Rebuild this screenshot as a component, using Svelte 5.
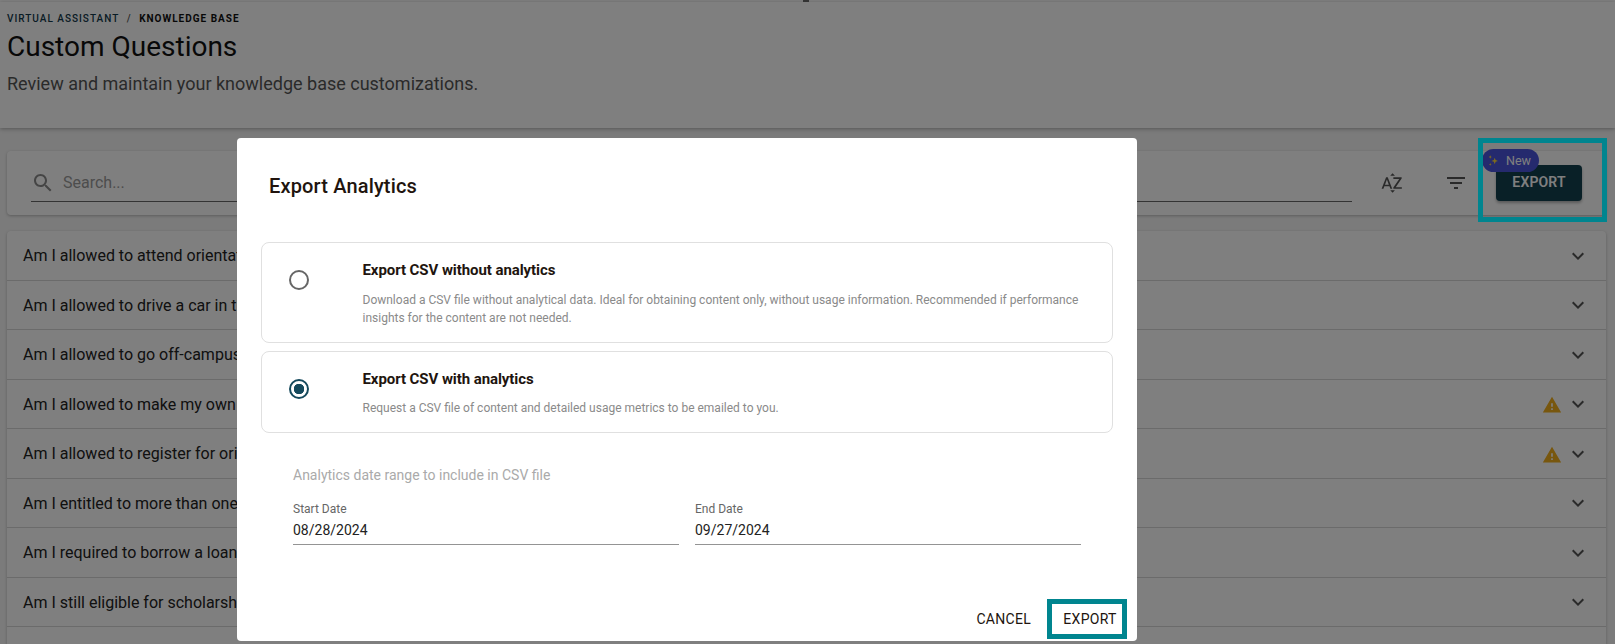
<script lang="ts">
	const questions = [
		{ text: 'Am I allowed to attend orientation virtually instead of in person?' },
		{ text: 'Am I allowed to drive a car in the first year on campus?' },
		{ text: 'Am I allowed to go off-campus during the school day?' },
		{ text: 'Am I allowed to make my own schedule for next term?', warn: true },
		{ text: 'Am I allowed to register for orientation after the deadline?', warn: true },
		{ text: 'Am I entitled to more than one transcript for free?' },
		{ text: 'Am I required to borrow a loan to pay my tuition?' },
		{ text: 'Am I still eligible for scholarships as a part-time student?' }
	];
</script>

<div class="page">
	<div class="topline"></div>
	<header class="head">
		<div class="crumbs"><span>VIRTUAL ASSISTANT</span><i>/</i><b>KNOWLEDGE BASE</b></div>
		<h1>Custom Questions</h1>
		<p>Review and maintain your knowledge base customizations.</p>
	</header>

	<main class="content">
		<section class="toolbar">
			<div class="search">
				<svg viewBox="0 0 24 24" width="24" height="24"><path d="M15.5 14h-.79l-.28-.27C15.41 12.59 16 11.11 16 9.5 16 5.91 13.09 3 9.5 3S3 5.91 3 9.5 5.91 16 9.5 16c1.61 0 3.09-.59 4.23-1.57l.27.28v.79l5 4.99L20.49 19l-4.99-5zm-6 0C7.01 14 5 11.99 5 9.5S7.01 5 9.5 5 14 7.01 14 9.5 11.99 14 9.5 14z" /></svg>
				<span>Search...</span>
			</div>
			<svg class="tool" viewBox="0 0 24 24" width="24" height="24"><path d="M14.94 4.66h-4.72l2.36-2.36 2.36 2.36zm-4.69 14.71h4.66l-2.33 2.33-2.33-2.33zM6.1 6.27 1.6 17.73h1.84l.92-2.45h5.11l.92 2.45h1.84L7.74 6.27H6.1zm-1.13 7.37 1.94-5.18 1.94 5.18H4.97zm10.76 2.5h6.12v1.59h-8.53v-1.29l5.92-8.56h-5.88v-1.6h8.3v1.26l-5.93 8.6z" /></svg>
			<svg class="tool filter" viewBox="0 0 24 24" width="24" height="24"><path d="M10 18h4v-2h-4v2zM3 6v2h18V6H3zm3 7h12v-2H6v2z" /></svg>
			<div class="export-wrap">
				<button class="export">EXPORT</button>
				<span class="badge">
					<svg viewBox="0 0 16 16" width="13" height="13"><path d="M9.5 4.5 10.6 7.4 13.5 8.5 10.6 9.6 9.5 12.5 8.4 9.6 5.5 8.5 8.4 7.4Z" /><path d="M4 1.5 4.6 3 6 3.6 4.6 4.2 4 5.7 3.4 4.2 2 3.6 3.4 3ZM4 11 4.5 12.2 5.7 12.7 4.5 13.2 4 14.4 3.5 13.2 2.3 12.7 3.5 12.2Z" /></svg>
					<span>New</span>
				</span>
			</div>
		</section>

		<ul class="list">
			{#each questions as q}
				<li>
					<span class="q">{q.text}</span>
					{#if q.warn}
						<svg class="warn" viewBox="0 0 24 24" width="20" height="20"><path d="M1 21h22L12 2 1 21zm12-3h-2v-2h2v2zm0-4h-2v-4h2v4z" /></svg>
					{/if}
					<svg class="chev" viewBox="0 0 24 24" width="24" height="24"><path d="M16.59 8.59 12 13.17 7.41 8.59 6 10l6 6 6-6z" /></svg>
				</li>
			{/each}
			<li class="blank"></li>
		</ul>
	</main>

	<div class="backdrop"></div>
	<div class="cursor"></div>

	<div class="highlight top"></div>

	<div class="dialog">
		<h2>Export Analytics</h2>

		<div class="options">
			<div class="option first">
				<span class="radio"></span>
				<div>
					<h3>Export CSV without analytics</h3>
					<p>Download a CSV file without analytical data. Ideal for obtaining content only, without usage information. Recommended if performance insights for the content are not needed.</p>
				</div>
			</div>
			<div class="option second">
				<span class="radio on"></span>
				<div>
					<h3>Export CSV with analytics</h3>
					<p>Request a CSV file of content and detailed usage metrics to be emailed to you.</p>
				</div>
			</div>
		</div>

		<div class="range">
			<div class="range-title">Analytics date range to include in CSV file</div>
			<div class="dates">
				<div class="field">
					<span class="lbl">Start Date</span>
					<div class="val">08/28/2024</div>
				</div>
				<div class="field">
					<span class="lbl">End Date</span>
					<div class="val">09/27/2024</div>
				</div>
			</div>
		</div>

		<div class="actions">
			<button class="txt">CANCEL</button>
			<button class="txt hl">EXPORT</button>
		</div>
	</div>
</div>

<style>
	:global(body) {
		margin: 0;
		font-family: Roboto, 'Liberation Sans', sans-serif;
	}

	.page {
		position: relative;
		width: 1615px;
		height: 644px;
		overflow: hidden;
		background: #f6f6f6;
		color: #1a1a1a;
	}

	.topline {
		height: 2px;
		background: #fff;
	}

	.head {
		height: 126px;
		box-sizing: border-box;
		padding: 11px 7px 0;
		background: #fff;
		box-shadow: 0 1px 4px rgba(0, 0, 0, 0.3);
		position: relative;
	}

	.crumbs {
		display: flex;
		align-items: center;
		gap: 7.5px;
		font-size: 10px;
		line-height: 12px;
		font-weight: 500;
		letter-spacing: 0.1em;
		color: #12384a;
	}

	.crumbs i {
		font-style: normal;
		color: #555;
	}

	.crumbs b {
		font-weight: 700;
		color: #111;
	}

	h1 {
		margin: 5px 0 0;
		font-size: 28px;
		line-height: 34px;
		font-weight: 400;
		color: #111;
	}

	.head p {
		margin: 8px 0 0;
		font-size: 18px;
		line-height: 24px;
		color: #555;
	}

	.content {
		padding: 23px 9px 0 7px;
	}

	.toolbar {
		display: flex;
		align-items: center;
		height: 64px;
		padding-left: 24px;
		background: #fff;
		border-radius: 4px;
		box-shadow: 0 1px 3px rgba(0, 0, 0, 0.25);
	}

	.search {
		flex: 1;
		display: flex;
		align-items: center;
		gap: 8px;
		height: 37px;
		box-sizing: border-box;
		border-bottom: 1px solid #666;
		font-size: 16px;
		color: #9a9a9a;
	}

	.search svg {
		fill: #8a8a8a;
	}

	.tool {
		fill: #555;
		margin-left: 28px;
		flex: none;
	}

	.tool.filter {
		margin-left: 40px;
	}

	.export-wrap {
		position: relative;
		margin: 0 24px 0 28px;
	}

	.export {
		display: block;
		width: 86px;
		height: 36px;
		padding: 0 0 2px;
		border: 0;
		border-radius: 4px;
		background: #12404f;
		color: #fff;
		font: 600 14px/34px Roboto, sans-serif;
		letter-spacing: 0.01em;
		box-shadow: 0 2px 3px rgba(0, 0, 0, 0.3);
	}

	.badge {
		position: absolute;
		left: -14px;
		top: -16px;
		display: flex;
		align-items: center;
		gap: 6px;
		height: 23px;
		width: 57px;
		box-sizing: border-box;
		padding: 0 0 1px 5px;
		border-radius: 12px;
		background: #4a54dc;
		color: #fff;
		font-size: 12.5px;
	}

	.badge svg {
		fill: #ffd83a;
		flex: none;
	}

	.list {
		list-style: none;
		margin: 16px 0 0;
		padding: 0;
		background: #fff;
		border-radius: 4px;
		box-shadow: 0 1px 3px rgba(0, 0, 0, 0.25);
	}

	.list li {
		display: flex;
		align-items: center;
		height: 49.5px;
		box-sizing: border-box;
		padding: 1px 16px 0;
		border-bottom: 1px solid #d6d6d6;
		font-size: 16px;
		color: #222;
	}

	.q {
		flex: 1;
	}

	.warn {
		fill: #f0ae1d;
		margin: 2px 4px 0 0;
	}

	.chev {
		fill: #555;
	}

	.backdrop {
		position: absolute;
		inset: 0;
		background: rgba(0, 0, 0, 0.5);
	}

	.cursor {
		position: absolute;
		left: 803px;
		top: 0;
		width: 6px;
		height: 2px;
		background: #333;
	}

	.highlight.top {
		position: absolute;
		left: 1478px;
		top: 138px;
		width: 129px;
		height: 84px;
		box-sizing: border-box;
		border: 5px solid #00858f;
	}

	.dialog {
		position: absolute;
		left: 237px;
		top: 138px;
		width: 900px;
		height: 503px;
		background: #fff;
		border-radius: 4px;
		display: flex;
		flex-direction: column;
		color: #21140e;
	}

	h2 {
		margin: 0;
		padding: 34px 32px 0;
		font-size: 20px;
		line-height: 28px;
		font-weight: 500;
		letter-spacing: 0.0075em;
	}

	.options {
		margin: 42px 24px 0;
		display: flex;
		flex-direction: column;
		gap: 8px;
	}

	.option {
		display: flex;
		box-sizing: border-box;
		border: 1px solid #e0e0e0;
		border-radius: 8px;
		padding: 17px 24px 0 27px;
	}

	.option.first {
		height: 101px;
	}

	.option.second {
		height: 82px;
	}

	.radio {
		flex: none;
		width: 20px;
		height: 20px;
		box-sizing: border-box;
		border: 2px solid #666;
		border-radius: 50%;
		margin: 10px 53.5px 0 0;
	}

	.radio.on {
		border-color: #15495c;
		background: radial-gradient(circle, #15495c 0 5px, transparent 5.5px);
	}

	h3 {
		margin: 0;
		font-size: 15px;
		line-height: 20px;
		font-weight: 700;
		letter-spacing: -0.005em;
	}

	.option p {
		margin: 10px 0 0;
		font-size: 12px;
		line-height: 18px;
		color: #8a8a8a;
	}

	.option.first p {
		margin-top: 11px;
	}

	.range {
		margin: 33px 56px 0;
	}

	.range-title {
		font-size: 14px;
		line-height: 18px;
		color: #aaa;
	}

	.dates {
		display: grid;
		grid-template-columns: 1fr 1fr;
		gap: 16px;
		margin-top: 18px;
	}

	.lbl {
		display: block;
		font-size: 12px;
		line-height: 14px;
		color: #666;
	}

	.val {
		font-size: 14px;
		line-height: 20px;
		padding: 4px 0;
		color: #222;
		border-bottom: 1px solid #949494;
	}

	.actions {
		margin-top: auto;
		display: flex;
		justify-content: flex-end;
		align-items: center;
		padding: 0 10px 2px 0;
	}

	.txt {
		border: 0;
		background: none;
		color: #21140e;
		font: 400 14px/30px Roboto, sans-serif;
		letter-spacing: 0.02em;
		padding: 0 10px;
		height: 40px;
		box-sizing: border-box;
	}

	.txt.hl {
		width: 80px;
		border: 5px solid #00858f;
		line-height: 30px;
		padding: 0 0 0 6px;
		margin-left: 6px;
	}
</style>
